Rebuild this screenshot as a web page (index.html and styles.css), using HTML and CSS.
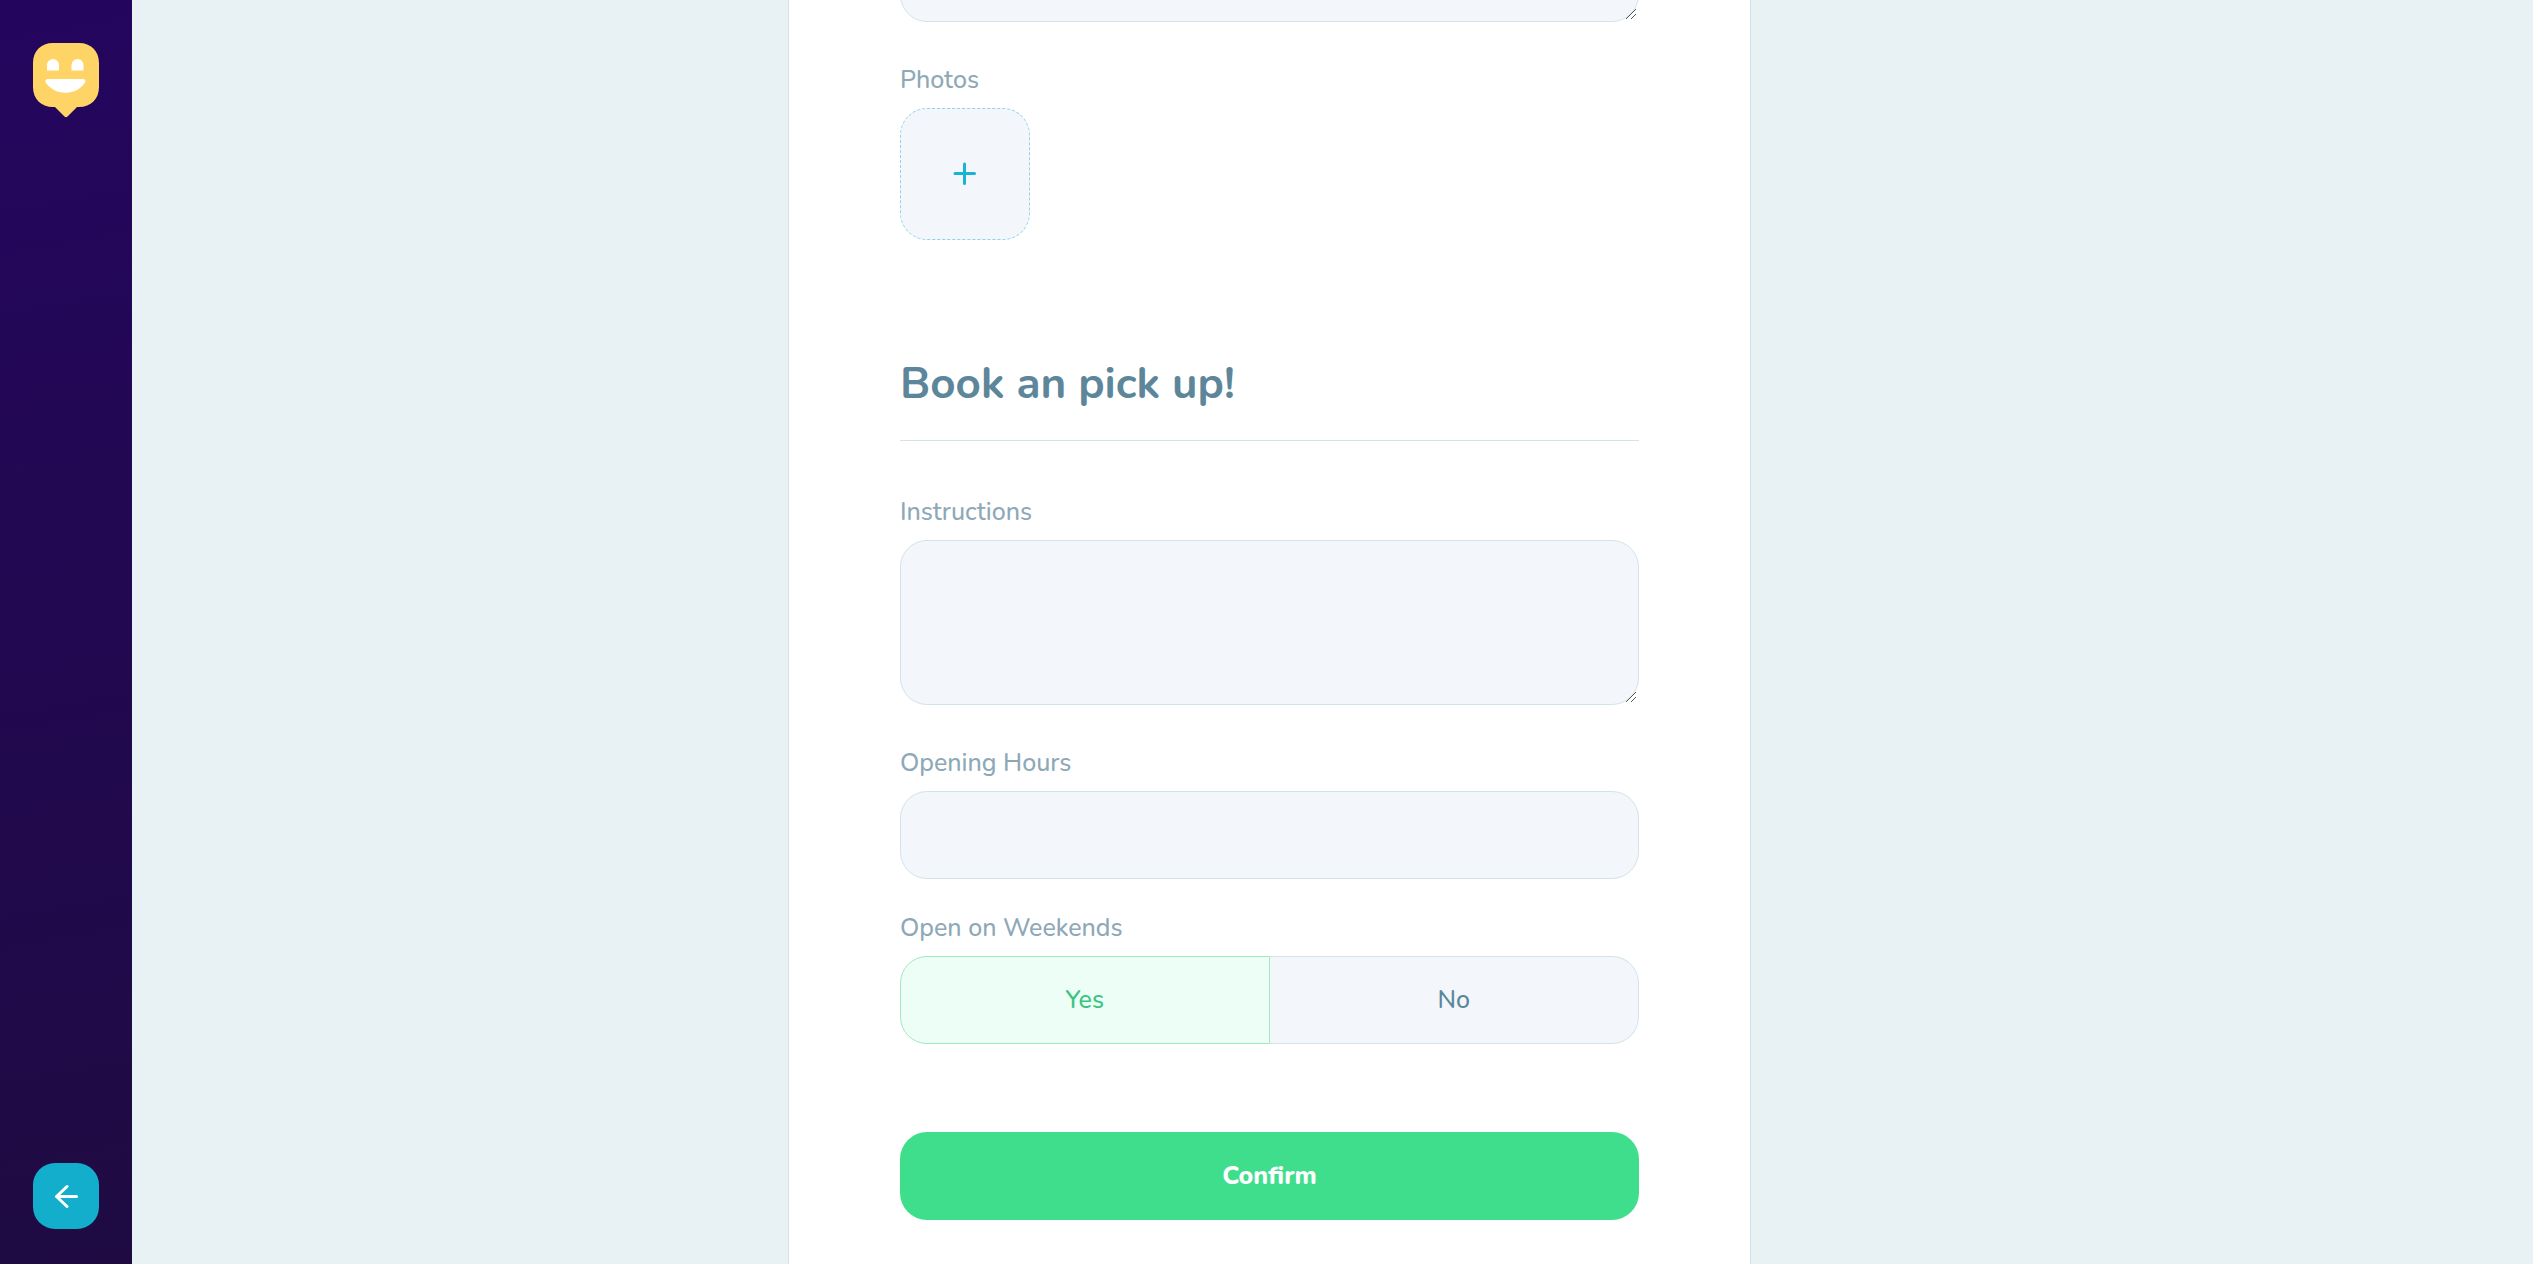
FILE: index.html
```html
<!DOCTYPE html>
<html lang="en">
<head>
<meta charset="utf-8">
<meta name="viewport" content="width=device-width, initial-scale=1">
<title>Book a pick up</title>
<link rel="stylesheet" href="styles.css">
</head>
<body>
<div class="app">
  <aside class="sidebar">
    <a class="logo" href="#" aria-label="Home">
      <svg width="66" height="75" viewBox="0 0 66 75" aria-hidden="true">
        <path fill="#ffd466" d="M20 0H46C58 0 66 8 66 20V44C66 56 58 64 46 64H44L34.500 73.500Q33 75 31.500 73.500L22 64H20C8 64 0 56 0 44V20C0 8 8 0 20 0Z"/>
        <path fill="#fff" d="M14 27.500V22a6 6 0 0 1 12 0V27.500ZM38.500 27.500V22a6 6 0 0 1 12 0V27.500Z"/>
        <path fill="#fff" d="M14.500 36H50.500Q53.500 36.500 52 39.500C48 46 41 49.700 32.500 49.700S17 46 12.700 39.500Q11.500 36.500 14.500 36Z"/>
      </svg>
    </a>
    <button class="back" type="button" aria-label="Back">
      <svg width="24" height="24" viewBox="0 0 24 24" fill="none" stroke="#fff" stroke-width="3" stroke-linecap="round" stroke-linejoin="round" aria-hidden="true"><path d="M22.500 12.500H2.500M13 2.500 2.500 12.500l10.500 10"/></svg>
    </button>
  </aside>
  <main class="main">
    <form class="card">
      <textarea class="field area area-first" aria-label="Description"></textarea>
      <div class="group group-area">
        <label class="label" for="photos">Photos</label>
        <button class="add" id="photos" type="button">
          <svg width="24" height="24" viewBox="0 0 24 24" fill="none" stroke="#17b4d3" stroke-width="3" stroke-linecap="round" aria-hidden="true"><path d="M11.500 2V21.500M2 11.500H21.500"/></svg>
        </button>
      </div>
      <h2 class="title">Book an pick up!</h2>
      <div class="group">
        <label class="label" for="instructions">Instructions</label>
        <textarea class="field area" id="instructions"></textarea>
      </div>
      <div class="group group-area">
        <label class="label" for="hours">Opening Hours</label>
        <input class="field" id="hours" type="text">
      </div>
      <fieldset class="group group-input">
        <legend class="label">Open on Weekends</legend>
        <div class="toggle">
          <input class="radio" type="radio" name="weekends" id="yes" checked>
          <label class="option" for="yes">Yes</label>
          <input class="radio" type="radio" name="weekends" id="no">
          <label class="option" for="no">No</label>
        </div>
      </fieldset>
      <button class="confirm" type="submit">Confirm</button>
    </form>
  </main>
</div>
</body>
</html>
```
FILE: styles.css
```css
* { box-sizing: border-box; }

body {
  margin: 0;
  background: #e8f1f4;
  color: #5e869b;
  font: 500 25px/36px Nunito, Lato, sans-serif;
}

button, input, textarea { font: inherit; }

.app {
  display: grid;
  grid-template-columns: 132px 1fr;
  min-height: 100vh;
}

.sidebar {
  position: sticky;
  top: 0;
  height: 100vh;
  display: flex;
  flex-direction: column;
  align-items: center;
  justify-content: space-between;
  padding: 43px 0 35px;
  background: linear-gradient(170deg, #24055e, #1f0b42);
}

.logo, .logo svg { display: block; }

.back {
  display: grid;
  place-items: center;
  width: 66px;
  height: 66px;
  padding: 0;
  border: 0;
  border-radius: 22px;
  background: #13aecc;
}

.main {
  display: flex;
  justify-content: center;
  padding-right: 126px;
  overflow: hidden;
}

.card {
  display: flex;
  flex-direction: column;
  width: 100%;
  max-width: 963px;
  padding: 0 111px 44px;
  border: solid #d3e3e7;
  border-width: 0 1px;
  background: #fff;
}

.group {
  display: flex;
  flex-direction: column;
  min-width: 0;
  margin: 0;
  padding: 0;
  border: 0;
}

.group-area { margin-top: 40px; }
.group-input { margin-top: 31px; }

.label {
  margin-bottom: 10px;
  padding: 0;
  color: #8da8b7;
}

.field {
  display: block;
  width: 100%;
  height: 88px;
  padding: 24px;
  border: 1px solid #d3e3e7;
  border-radius: 27px;
  background: #f3f7fb;
  color: #5e869b;
}

.area {
  height: 165px;
  resize: vertical;
}

.area::-webkit-resizer {
  background: url("data:image/svg+xml,%3Csvg xmlns='http://www.w3.org/2000/svg' width='15' height='15'%3E%3Cpath d='M3 13 13 3M8 13l5-5' stroke='%23555' fill='none'/%3E%3C/svg%3E") no-repeat;
}

.area-first {
  flex: none;
  margin-top: -143px;
}

.add {
  display: grid;
  place-items: center;
  width: 130px;
  height: 132px;
  padding: 0;
  border: 1px dashed #8fd3ea;
  border-radius: 27px;
  background: #f3f7fb;
}

.title {
  margin: 114px 0 53px;
  padding-bottom: 26px;
  border-bottom: 1px solid #d3e3e7;
  font-size: 44px;
  line-height: 60px;
  font-weight: 700;
}

.toggle {
  display: grid;
  grid-template-columns: 1fr 1fr;
  position: relative;
}

.radio {
  position: absolute;
  opacity: 0;
}

.option {
  height: 88px;
  padding: 25px 0;
  border: 1px solid #d3e3e7;
  background: #f3f7fb;
  text-align: center;
}

.option:first-of-type { border-radius: 27px 0 0 27px; }

.option:last-of-type {
  border-left: 0;
  border-radius: 0 27px 27px 0;
}

.radio:checked + .option {
  border-color: #a3e7c4;
  background: #edfef7;
  color: #3bc47e;
}

.confirm {
  height: 88px;
  margin-top: 88px;
  border: 0;
  border-radius: 27px;
  background: #3fde8d;
  color: #fff;
  font-weight: 800;
}
```
